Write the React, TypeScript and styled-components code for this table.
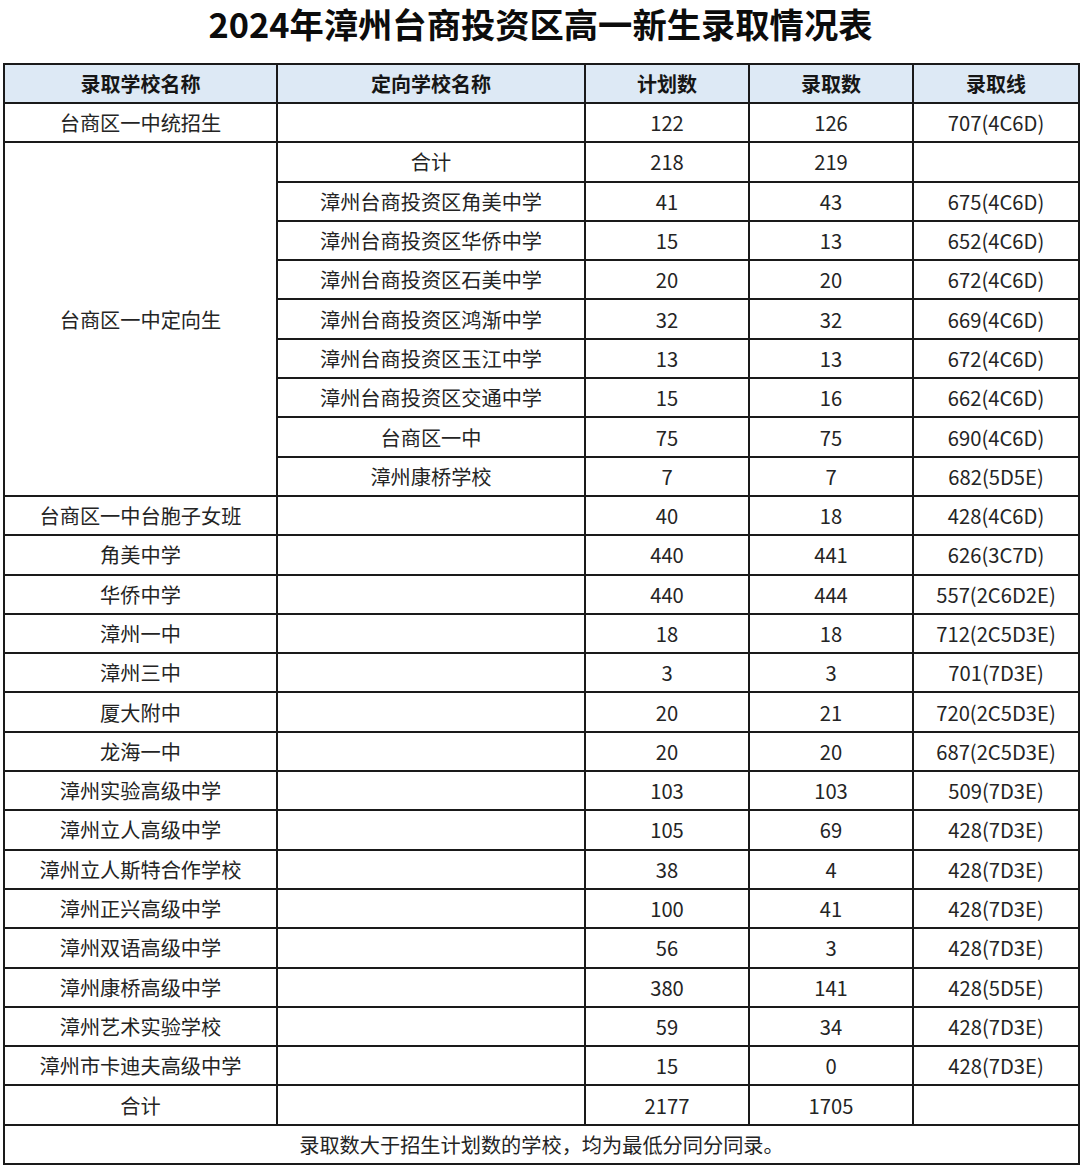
import React from 'react';
import styled, { createGlobalStyle } from 'styled-components';

const GlobalStyle = createGlobalStyle`
  html, body {
    margin: 0;
    padding: 0;
    background: #ffffff;
    font-family: "Noto Sans CJK SC", "Noto Sans", sans-serif;
    color: #1c1c1c;
  }
`;

const Page = styled.div`
  width: 1080px;
  padding: 2px 2px 0 3px;
  box-sizing: border-box;
`;

const Title = styled.h1`
  margin: 0 0 19px;
  height: 42px;
  line-height: 42px;
  text-align: center;
  font-size: 34.3px;
  font-weight: 700;
  color: #0c0c0c;
`;

const Table = styled.table`
  width: 1075px;
  border-collapse: collapse;
  table-layout: fixed;
  border: 2.5px solid #1a1a1a;
`;

const HeadCell = styled.th`
  height: 37px;
  padding: 0;
  background: #dde9f5;
  border: 2px solid #1a1a1a;
  font-size: 20px;
  font-weight: 700;
  color: #161616;
  text-align: center;
`;

const Cell = styled.td`
  height: 37.3px;
  padding: 0;
  border: 2px solid #1a1a1a;
  font-size: 20.2px;
  font-weight: 400;
  color: #242424;
  text-align: center;
  white-space: nowrap;
`;

type Row = [string, string, string, string, string];

const topRow: Row = ['台商区一中统招生', '', '122', '126', '707(4C6D)'];

const directed: [string, string, string, string][] = [
  ['合计', '218', '219', ''],
  ['漳州台商投资区角美中学', '41', '43', '675(4C6D)'],
  ['漳州台商投资区华侨中学', '15', '13', '652(4C6D)'],
  ['漳州台商投资区石美中学', '20', '20', '672(4C6D)'],
  ['漳州台商投资区鸿渐中学', '32', '32', '669(4C6D)'],
  ['漳州台商投资区玉江中学', '13', '13', '672(4C6D)'],
  ['漳州台商投资区交通中学', '15', '16', '662(4C6D)'],
  ['台商区一中', '75', '75', '690(4C6D)'],
  ['漳州康桥学校', '7', '7', '682(5D5E)'],
];

const rest: Row[] = [
  ['台商区一中台胞子女班', '', '40', '18', '428(4C6D)'],
  ['角美中学', '', '440', '441', '626(3C7D)'],
  ['华侨中学', '', '440', '444', '557(2C6D2E)'],
  ['漳州一中', '', '18', '18', '712(2C5D3E)'],
  ['漳州三中', '', '3', '3', '701(7D3E)'],
  ['厦大附中', '', '20', '21', '720(2C5D3E)'],
  ['龙海一中', '', '20', '20', '687(2C5D3E)'],
  ['漳州实验高级中学', '', '103', '103', '509(7D3E)'],
  ['漳州立人高级中学', '', '105', '69', '428(7D3E)'],
  ['漳州立人斯特合作学校', '', '38', '4', '428(7D3E)'],
  ['漳州正兴高级中学', '', '100', '41', '428(7D3E)'],
  ['漳州双语高级中学', '', '56', '3', '428(7D3E)'],
  ['漳州康桥高级中学', '', '380', '141', '428(5D5E)'],
  ['漳州艺术实验学校', '', '59', '34', '428(7D3E)'],
  ['漳州市卡迪夫高级中学', '', '15', '0', '428(7D3E)'],
  ['合计', '', '2177', '1705', ''],
];

const headers = ['录取学校名称', '定向学校名称', '计划数', '录取数', '录取线'];
const widths = [273, 308, 164, 164, 166];

const App: React.FC = () => (
  <Page>
    <GlobalStyle />
    <Title>2024年漳州台商投资区高一新生录取情况表</Title>
    <Table>
      <colgroup>
        {widths.map((w, i) => (
          <col key={i} style={{ width: w }} />
        ))}
      </colgroup>
      <thead>
        <tr>
          {headers.map((h) => (
            <HeadCell key={h}>{h}</HeadCell>
          ))}
        </tr>
      </thead>
      <tbody>
        <tr>
          {topRow.map((c, i) => (
            <Cell key={i}>{c}</Cell>
          ))}
        </tr>
        {directed.map((r, idx) => (
          <tr key={r[0]}>
            {idx === 0 && <Cell rowSpan={directed.length}>台商区一中定向生</Cell>}
            {r.map((c, i) => (
              <Cell key={i}>{c}</Cell>
            ))}
          </tr>
        ))}
        {rest.map((r, idx) => (
          <tr key={idx}>
            {r.map((c, i) => (
              <Cell key={i}>{c}</Cell>
            ))}
          </tr>
        ))}
        <tr>
          <Cell colSpan={5}>录取数大于招生计划数的学校，均为最低分同分同录。</Cell>
        </tr>
      </tbody>
    </Table>
  </Page>
);

export default App;
